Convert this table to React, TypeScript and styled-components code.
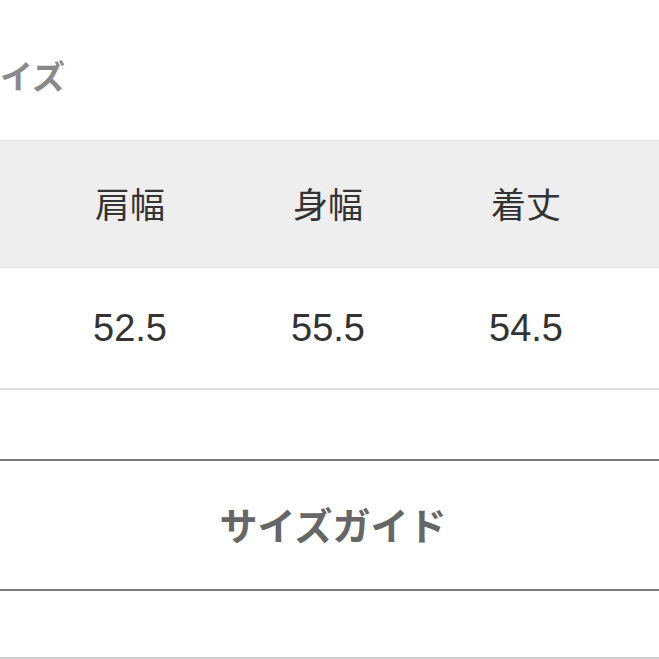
import React from 'react';
import styled, { createGlobalStyle } from 'styled-components';

const GlobalStyle = createGlobalStyle`
  html, body {
    margin: 0;
    padding: 0;
    background: #fff;
    overflow: hidden;
  }
  body {
    font-family: 'Noto Sans CJK JP', 'Noto Sans', sans-serif;
  }
`;

const Viewport = styled.div`
  width: 100%;
  height: 659px;
  overflow: hidden;
`;

const Page = styled.div`
  width: 732px;
  margin-left: -33px;
`;

const SectionTitle = styled.h2`
  margin: 0;
  padding-top: 59px;
  height: 140px;
  box-sizing: border-box;
  font-size: 33px;
  line-height: 33px;
  font-weight: 700;
  color: #8a8a8a;
`;

const Row = styled.div<{ $head?: boolean }>`
  display: grid;
  grid-template-columns: 64px repeat(3, 198px) 1fr;
  align-items: center;
  height: ${(p) => (p.$head ? '128px' : '122px')};
  box-sizing: border-box;
  background: ${(p) => (p.$head ? '#eeeeee' : '#ffffff')};
  border-top: ${(p) => (p.$head ? '1px solid #e2e2e2' : 'none')};
  border-bottom: ${(p) => (p.$head ? '1px solid #e6e6e6' : '2px solid #dedede')};
`;

const HeadCell = styled.div`
  text-align: center;
  font-size: 35px;
  line-height: 1;
  padding-bottom: 4px;
  color: #333;
`;

const NumCell = styled.div`
  text-align: center;
  font-family: 'Liberation Sans', Arial, sans-serif;
  font-size: 38px;
  line-height: 1;
  color: #333;
`;

const GuideButton = styled.button`
  display: block;
  width: 100%;
  height: 132px;
  margin-top: 69px;
  padding: 0 0 3px;
  background: #fff;
  border: none;
  border-top: 2px solid #7a7a7a;
  border-bottom: 2px solid #7a7a7a;
  font-family: 'Noto Sans CJK JP', 'Noto Sans', sans-serif;
  font-size: 38px;
  font-weight: 700;
  color: #666;
  cursor: pointer;
`;

const BottomRule = styled.div`
  margin-top: 66px;
  border-top: 2px solid #cfcfcf;
`;

const heads = ['肩幅', '身幅', '着丈'];
const values = ['52.5', '55.5', '54.5'];

const App: React.FC = () => (
  <Viewport>
    <GlobalStyle />
    <Page>
      <SectionTitle>サイズ</SectionTitle>
      <Row $head>
        <div />
        {heads.map((h) => (
          <HeadCell key={h}>{h}</HeadCell>
        ))}
        <div />
      </Row>
      <Row>
        <div />
        {values.map((v, i) => (
          <NumCell key={i}>{v}</NumCell>
        ))}
        <div />
      </Row>
      <GuideButton>サイズガイド</GuideButton>
      <BottomRule />
    </Page>
  </Viewport>
);

export default App;
